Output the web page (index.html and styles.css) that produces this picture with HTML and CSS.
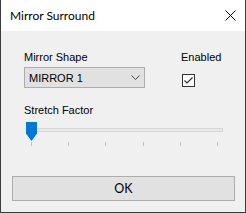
FILE: index.html
```html
<!DOCTYPE html>
<html lang="en">
<head>
    <meta charset="UTF-8">
    <title>Mirror Surround</title>
    <link rel="stylesheet" href="styles.css">
</head>
<body>
    <div class="window">
        <div class="titlebar">
            <span class="title">Mirror Surround</span>
            <svg class="close" width="11" height="11" viewBox="0 0 11 11">
                <path d="M0.5 0.5 L10.5 10.5 M10.5 0.5 L0.5 10.5" stroke="#000" stroke-width="1" fill="none"/>
            </svg>
        </div>
        <div class="content">
            <div class="top-row">
                <div class="field">
                    <label>Mirror Shape</label>
                    <div class="combo">
                        <span>MIRROR 1</span>
                        <svg width="9" height="5" viewBox="0 0 9 5">
                            <path d="M0.5 0.5 L4.5 4.5 L8.5 0.5" stroke="#444" stroke-width="1" fill="none"/>
                        </svg>
                    </div>
                </div>
                <div class="field enabled">
                    <label>Enabled</label>
                    <span class="check">
                        <svg width="11" height="11" viewBox="0 0 11 11">
                            <path d="M1.5 5.5 L4 8 L9.5 2.5" stroke="#333" stroke-width="1.2" fill="none"/>
                        </svg>
                    </span>
                </div>
            </div>
            <div class="field stretch">
                <label>Stretch Factor</label>
                <div class="slider">
                    <div class="track"></div>
                    <div class="thumb"></div>
                    <div class="ticks">
                        <span></span><span></span><span></span><span></span><span></span><span></span>
                    </div>
                </div>
            </div>
            <button class="ok">OK</button>
        </div>
    </div>
</body>
</html>
```

FILE: styles.css
```css
body {
    margin: 0;
    font-family: "Liberation Sans", Arial, sans-serif;
    font-size: 11px;
    color: #000;
    background: #2f3a2a;
}
.window {
    width: 246px;
    height: 213px;
    box-sizing: border-box;
    border: 1px solid #3c3c3c;
    border-top: none;
    background: #f0f0f0;
    display: flex;
    flex-direction: column;
}
.titlebar {
    height: 31px;
    background: #fff;
    display: flex;
    align-items: center;
    padding: 0 9px;
}
.title {
    font-family: "Lato", sans-serif;
    font-size: 12px;
    flex: 1;
    margin-top: -1px;
}
.close {
    margin-top: -1px;
}
.content {
    flex: 1;
    padding: 20px 10px 0 11px;
}
label {
    display: block;
    line-height: 13px;
}
.top-row {
    display: flex;
    padding-left: 12px;
}
.combo {
    margin-top: 3px;
    width: 121px;
    height: 21px;
    box-sizing: border-box;
    border: 1px solid #adadad;
    background: #e1e1e1;
    display: flex;
    align-items: center;
    justify-content: space-between;
    padding: 0 4px 0 4px;
    font-size: 11px;
}
.enabled {
    margin-left: 36px;
}
.check {
    display: flex;
    align-items: center;
    justify-content: center;
    width: 13px;
    height: 13px;
    box-sizing: border-box;
    margin: 10px 0 0 1px;
    border: 1px solid #333;
    background: #fff;
}
.stretch {
    margin-top: 16px;
    padding-left: 12px;
}
.slider {
    position: relative;
    width: 197px;
    margin: 5px 0 0 2px;
    padding-top: 6px;
}
.track {
    height: 4px;
    box-sizing: border-box;
    border: 1px solid #d6d6d6;
    background: #e7eaea;
}
.thumb {
    position: absolute;
    left: 0;
    top: 0;
    width: 11px;
    height: 19px;
    background: #0078d7;
    clip-path: polygon(0 0, 100% 0, 100% 60%, 50% 100%, 0 60%);
}
.ticks {
    display: flex;
    justify-content: space-between;
    padding: 0 5px;
    margin-top: 10px;
}
.ticks span {
    width: 1px;
    height: 4px;
    background: #c4c4c4;
}
.ok {
    display: block;
    width: 223px;
    height: 25px;
    margin-top: 30px;
    border: 1px solid #adadad;
    background: #e1e1e1;
    font-family: "Lato", sans-serif;
    font-size: 12.5px;
    color: #000;
    padding: 0;
}
```
